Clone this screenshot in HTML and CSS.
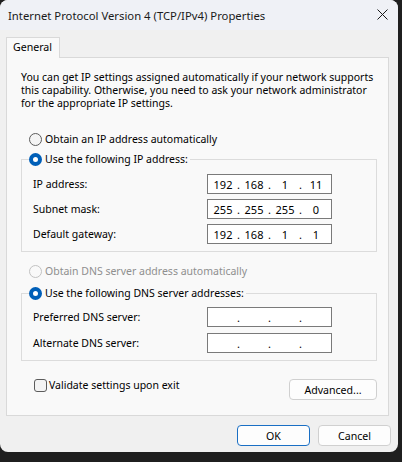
FILE: index.html
```html
<!DOCTYPE html>
<html lang="en">
<head>
    <meta charset="UTF-8">
    <title>Internet Protocol Version 4 (TCP/IPv4) Properties</title>
    <link rel="stylesheet" href="styles.css">
</head>
<body>
    <div class="window">
        <div class="titlebar">
            <span class="title">Internet Protocol Version 4 (TCP/IPv4) Properties</span>
            <span class="close-button">
                <svg width="11" height="11" viewBox="0 0 11 11"><path d="M0.5 0.5L10.5 10.5M10.5 0.5L0.5 10.5" stroke="#1a1a1a" stroke-width="1"/></svg>
            </span>
        </div>

        <div class="tabs">
            <div class="tab">General</div>
        </div>

        <div class="panel">
            <p class="intro">You can get IP settings assigned automatically if your network supports<br>
                this capability. Otherwise, you need to ask your network administrator<br>
                for the appropriate IP settings.</p>

            <div class="radio-row first-radio">
                <span class="radio"></span>
                <span>Obtain an IP address automatically</span>
            </div>

            <fieldset class="group ip-group">
                <legend class="radio-row">
                    <span class="radio checked"></span>
                    <span>Use the following IP address:</span>
                </legend>
                <div class="field-row">
                    <span>IP address:</span>
                    <div class="ip-box"><span>192</span><i>.</i><span>168</span><i>.</i><span>1</span><i>.</i><span>11</span></div>
                </div>
                <div class="field-row">
                    <span>Subnet mask:</span>
                    <div class="ip-box"><span>255</span><i>.</i><span>255</span><i>.</i><span>255</span><i>.</i><span>0</span></div>
                </div>
                <div class="field-row">
                    <span>Default gateway:</span>
                    <div class="ip-box"><span>192</span><i>.</i><span>168</span><i>.</i><span>1</span><i>.</i><span>1</span></div>
                </div>
            </fieldset>

            <div class="radio-row disabled dns-radio">
                <span class="radio"></span>
                <span>Obtain DNS server address automatically</span>
            </div>

            <fieldset class="group dns-group">
                <legend class="radio-row">
                    <span class="radio checked"></span>
                    <span>Use the following DNS server addresses:</span>
                </legend>
                <div class="field-row">
                    <span>Preferred DNS server:</span>
                    <div class="ip-box"><span></span><i>.</i><span></span><i>.</i><span></span><i>.</i><span></span></div>
                </div>
                <div class="field-row">
                    <span>Alternate DNS server:</span>
                    <div class="ip-box"><span></span><i>.</i><span></span><i>.</i><span></span><i>.</i><span></span></div>
                </div>
            </fieldset>

            <div class="bottom-row">
                <div class="check-row">
                    <span class="checkbox"></span>
                    <span>Validate settings upon exit</span>
                </div>
                <button class="btn advanced">Advanced...</button>
            </div>
        </div>

        <div class="footer">
            <button class="btn primary">OK</button>
            <button class="btn">Cancel</button>
        </div>
    </div>
</body>
</html>
```

FILE: styles.css
```css
body {
    margin: 0;
    background-color: #1f1f1f;
    font-family: 'Segoe UI', 'Noto Sans', sans-serif;
    font-size: 10.5px;
    color: #000;
}
.window {
    width: 398px;
    height: 452px;
    background-color: #f0f0f0;
    border-radius: 8px;
    overflow: hidden;
    display: flex;
    flex-direction: column;
}
.titlebar {
    height: 30px;
    background-color: #eff1f6;
    display: flex;
    align-items: center;
    justify-content: space-between;
    padding: 0 10px 0 8px;
    flex-shrink: 0;
}
.title {
    font-size: 11.3px;
    color: #1a1a1a;
}
.close-button {
    display: flex;
    margin-top: -1px;
}

.tabs {
    display: flex;
    padding: 7px 0 0 6px;
}
.tab {
    height: 20px;
    width: 46px;
    padding-left: 6px;
    line-height: 19px;
    font-size: 10.6px;
    background-color: #f9f9f9;
    border: 1px solid #d9d9d9;
    border-bottom: none;
    margin-bottom: -1px;
    position: relative;
    z-index: 1;
}

.panel {
    margin: 0 9px 0 6px;
    height: 344px;
    padding: 13px 11px 0 14px;
    background-color: #f9f9f9;
    border: 1px solid #d9d9d9;
}
.intro {
    margin: 0;
    line-height: 13px;
    white-space: nowrap;
}

.radio-row {
    display: flex;
    align-items: center;
    gap: 3px;
    height: 16px;
}
.first-radio {
    margin: 21px 0 0 8px;
}
.dns-radio {
    margin: 11px 0 0 8px;
}
.radio {
    width: 11px;
    height: 11px;
    border: 1px solid #5c5c5c;
    border-radius: 50%;
    background-color: #f4f4f4;
    box-sizing: content-box;
}
.radio.checked {
    width: 5px;
    height: 5px;
    border: 4px solid #005fb8;
    background-color: #fff;
}
.disabled {
    color: #8f8f8f;
}
.disabled .radio {
    border-color: #c2c2c2;
    background-color: #f9f9f9;
}

.group {
    margin: 0;
    padding: 0 0 7px 0;
    border: 1px solid #dcdcdc;
    display: flex;
    flex-direction: column;
    gap: 5px;
}
.group legend {
    padding: 0 2px 0 0;
    margin-left: 7px;
}
.ip-group {
    margin-top: 4px;
    padding-top: 7px;
}
.dns-group {
    margin-top: 6px;
    padding-top: 6px;
    gap: 6px;
}
.field-row {
    display: flex;
    align-items: center;
    justify-content: space-between;
    padding: 0 44px 0 11px;
    height: 20px;
}
.ip-box {
    width: 120px;
    height: 18px;
    padding-left: 3px;
    border: 1px solid #7a7a7a;
    background-color: #fff;
    display: flex;
    align-items: center;
    font-size: 11px;
}
.ip-box span {
    width: 24px;
    text-align: center;
}
.ip-box i {
    font-style: normal;
    width: 7px;
    text-align: center;
}

.bottom-row {
    display: flex;
    justify-content: space-between;
    align-items: flex-start;
    margin-top: 18px;
}
.check-row {
    display: flex;
    align-items: center;
    gap: 2px;
    margin: -1px 0 0 13px;
    height: 14px;
}
.checkbox {
    width: 11px;
    height: 11px;
    border: 1px solid #5c5c5c;
    border-radius: 3px;
    background-color: #f4f4f4;
}

.btn {
    font-family: inherit;
    font-size: 10.6px;
    color: #000;
    height: 21px;
    background-color: #fdfdfd;
    border: 1px solid #d0d0d0;
    border-radius: 4px;
    padding: 0;
}
.advanced {
    width: 88px;
}
.footer {
    display: flex;
    justify-content: flex-end;
    gap: 8px;
    padding: 9px 7px 0 0;
}
.footer .btn {
    width: 73px;
}
.btn.primary {
    border-color: #1a6fc4;
}
```
